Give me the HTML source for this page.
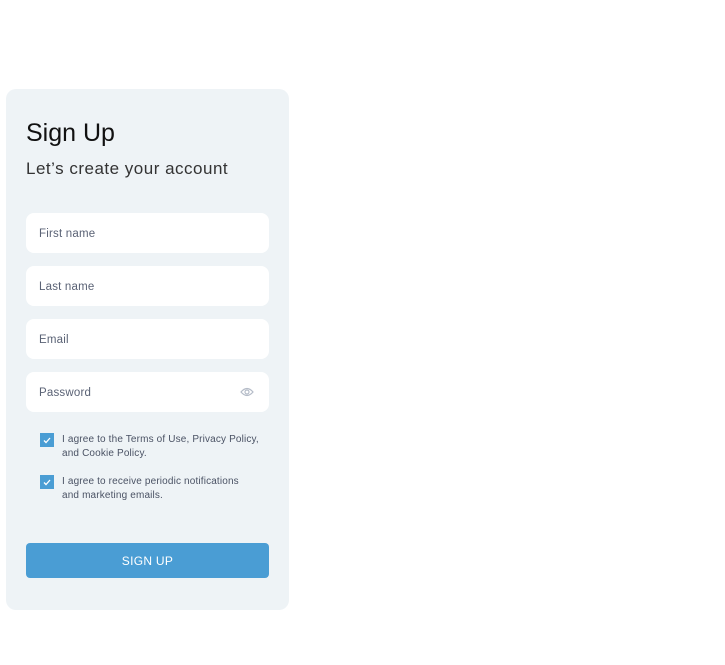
<!DOCTYPE html><html><head><style>
body{margin:0;width:725px;height:665px;background:#fff;font-family:"Liberation Sans",sans-serif;position:relative}
.card{position:absolute;left:6px;top:89px;width:283px;height:521px;background:#eef3f6;border-radius:10px}
.h1{position:absolute;left:26px;top:119px;font-size:25px;color:#111;}
.h2{position:absolute;left:26px;top:159px;font-size:17px;color:#333;letter-spacing:0.5px}
.in{position:absolute;left:26px;width:243px;height:40px;background:#fff;border-radius:8px;font-size:11.5px;color:#5a6275;line-height:42px;text-indent:13px;letter-spacing:0.2px}
.cb{position:absolute;left:40px;width:14px;height:14px;background:#4a9dd4;}
.t{position:absolute;left:62px;font-size:10px;color:#4a5264;line-height:14px;letter-spacing:0.15px}
.btn{position:absolute;left:26px;top:543px;width:243px;height:35px;background:#4a9dd4;border-radius:4px;color:#fff;font-size:12px;text-align:center;line-height:37px;letter-spacing:0.3px}
</style></head><body>
<div class="card"></div>
<div class="h1">Sign Up</div>
<div class="h2">Let’s create your account</div>
<div class="in" style="top:213px">First name</div>
<div class="in" style="top:266px">Last name</div>
<div class="in" style="top:319px">Email</div>
<div class="in" style="top:372px">Password
<svg style="position:absolute;left:214px;top:14px" width="14" height="12" viewBox="0 0 14 12"><path d="M1 6Q7 -1 13 6Q7 13 1 6Z" fill="none" stroke="#b5bcc8" stroke-width="1.2"/><circle cx="7" cy="6" r="2" fill="none" stroke="#b5bcc8" stroke-width="1.2"/></svg></div>
<div class="cb" style="top:433px"><svg width="14" height="14"><path d="M4 7.5L6 9.5L10 5" fill="none" stroke="#fff" stroke-width="1.3"/></svg></div>
<div class="t" style="top:433px">I agree to the Terms of Use, Privacy Policy,<br>and Cookie Policy.</div>
<div class="cb" style="top:475px"><svg width="14" height="14"><path d="M4 7.5L6 9.5L10 5" fill="none" stroke="#fff" stroke-width="1.3"/></svg></div>
<div class="t" style="top:475px">I agree to receive periodic notifications<br>and marketing emails.</div>
<div class="btn">SIGN UP</div>
</body></html>
